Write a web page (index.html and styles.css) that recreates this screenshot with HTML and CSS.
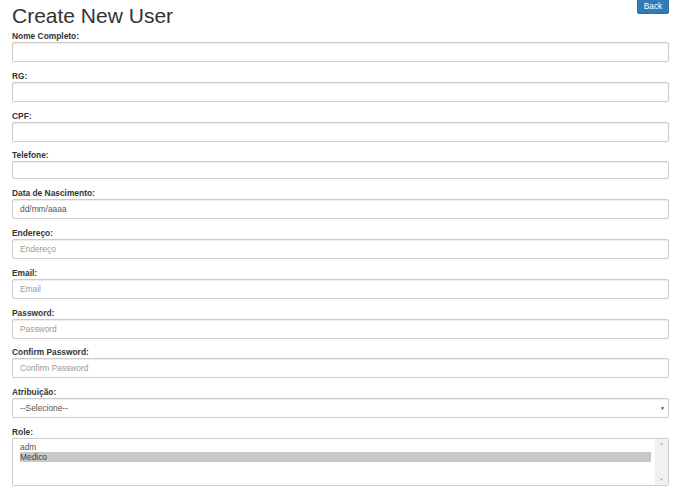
FILE: index.html
```html
<!DOCTYPE html>
<html lang="pt">
<head>
<meta charset="utf-8">
<title>Create New User</title>
<link rel="stylesheet" href="styles.css">
</head>
<body>
<div class="page">
  <div class="header">
    <h1 class="title">Create New User</h1>
    <a class="btn-back" href="#">Back</a>
  </div>
  <form class="form">
    <div class="group">
      <label class="label">Nome Completo:</label>
      <div class="field"></div>
    </div>
    <div class="group">
      <label class="label">RG:</label>
      <div class="field"></div>
    </div>
    <div class="group">
      <label class="label">CPF:</label>
      <div class="field"></div>
    </div>
    <div class="group">
      <label class="label">Telefone:</label>
      <div class="field field-short"></div>
    </div>
    <div class="group">
      <label class="label">Data de Nascimento:</label>
      <div class="field"><span class="value">dd/mm/aaaa</span></div>
    </div>
    <div class="group">
      <label class="label">Endereço:</label>
      <div class="field"><span class="placeholder">Endereço</span></div>
    </div>
    <div class="group">
      <label class="label">Email:</label>
      <div class="field"><span class="placeholder">Email</span></div>
    </div>
    <div class="group">
      <label class="label">Password:</label>
      <div class="field"><span class="placeholder">Password</span></div>
    </div>
    <div class="group">
      <label class="label">Confirm Password:</label>
      <div class="field"><span class="placeholder">Confirm Password</span></div>
    </div>
    <div class="group">
      <label class="label">Atribuição:</label>
      <div class="field select"><span class="value">--Selecione--</span><span class="caret">▼</span></div>
    </div>
    <div class="group">
      <label class="label">Role:</label>
      <div class="listbox">
        <div class="options">
          <div class="option">adm</div>
          <div class="option selected">Medico</div>
        </div>
        <div class="scrollbar"><span class="arrow">▲</span><span class="arrow">▼</span></div>
      </div>
    </div>
  </form>
</div>
</body>
</html>
```
FILE: styles.css
```css
html, body {
  margin: 0;
  padding: 0;
  background: #fff;
}
body {
  font-family: "Liberation Sans", Arial, sans-serif;
  color: #333;
}
.page {
  padding: 0 20px 0 12px;
}
.header {
  display: flex;
  justify-content: space-between;
  align-items: flex-start;
  height: 30px;
}
.title {
  margin: 4px 0 0 0;
  font-size: 21px;
  font-weight: 400;
  line-height: 24px;
  color: #333;
}
.btn-back {
  display: block;
  margin-top: -2px;
  width: 32px;
  height: 16px;
  box-sizing: border-box;
  background: #337ab7;
  border: 1px solid #2e6da4;
  border-radius: 2px;
  color: #fff;
  font-size: 8.4px;
  line-height: 14px;
  text-align: center;
  text-decoration: none;
}
.form {
  display: flex;
  flex-direction: column;
}
.group {
  display: flex;
  flex-direction: column;
  margin-bottom: 7.8px;
}
.label {
  display: block;
  font-size: 8.4px;
  font-weight: 700;
  line-height: 12px;
  margin-bottom: 0;
  color: #333;
}
.field {
  height: 20px;
  box-sizing: border-box;
  border: 1px solid #ccc;
  border-radius: 2px;
  box-shadow: inset 0 1px 1px rgba(0,0,0,.075);
  padding: 0 7px;
  display: flex;
  align-items: center;
  font-size: 8.4px;
}
.field-short {
  height: 18px;
}
.value {
  color: #555;
}
.placeholder {
  color: #999;
}
.select {
  justify-content: space-between;
  padding-right: 3px;
}
.caret {
  font-size: 5px;
  color: #444;
}
.listbox {
  height: 48px;
  box-sizing: border-box;
  border: 1px solid #ccc;
  border-radius: 2px;
  display: flex;
  font-size: 8.4px;
  color: #555;
}
.options {
  flex: 1;
  padding: 3px 3px 0 7px;
}
.option {
  line-height: 10px;
  padding-left: 0;
}
.option.selected {
  background: #c8c8c8;
  color: #444;
}
.scrollbar {
  width: 13px;
  background: #f1f1f1;
  border-left: 1px solid #fff;
  display: flex;
  flex-direction: column;
  justify-content: space-between;
  align-items: center;
  padding: 2px 0;
}
.arrow {
  font-size: 4px;
  color: #a3a3a3;
  line-height: 6px;
}
```
